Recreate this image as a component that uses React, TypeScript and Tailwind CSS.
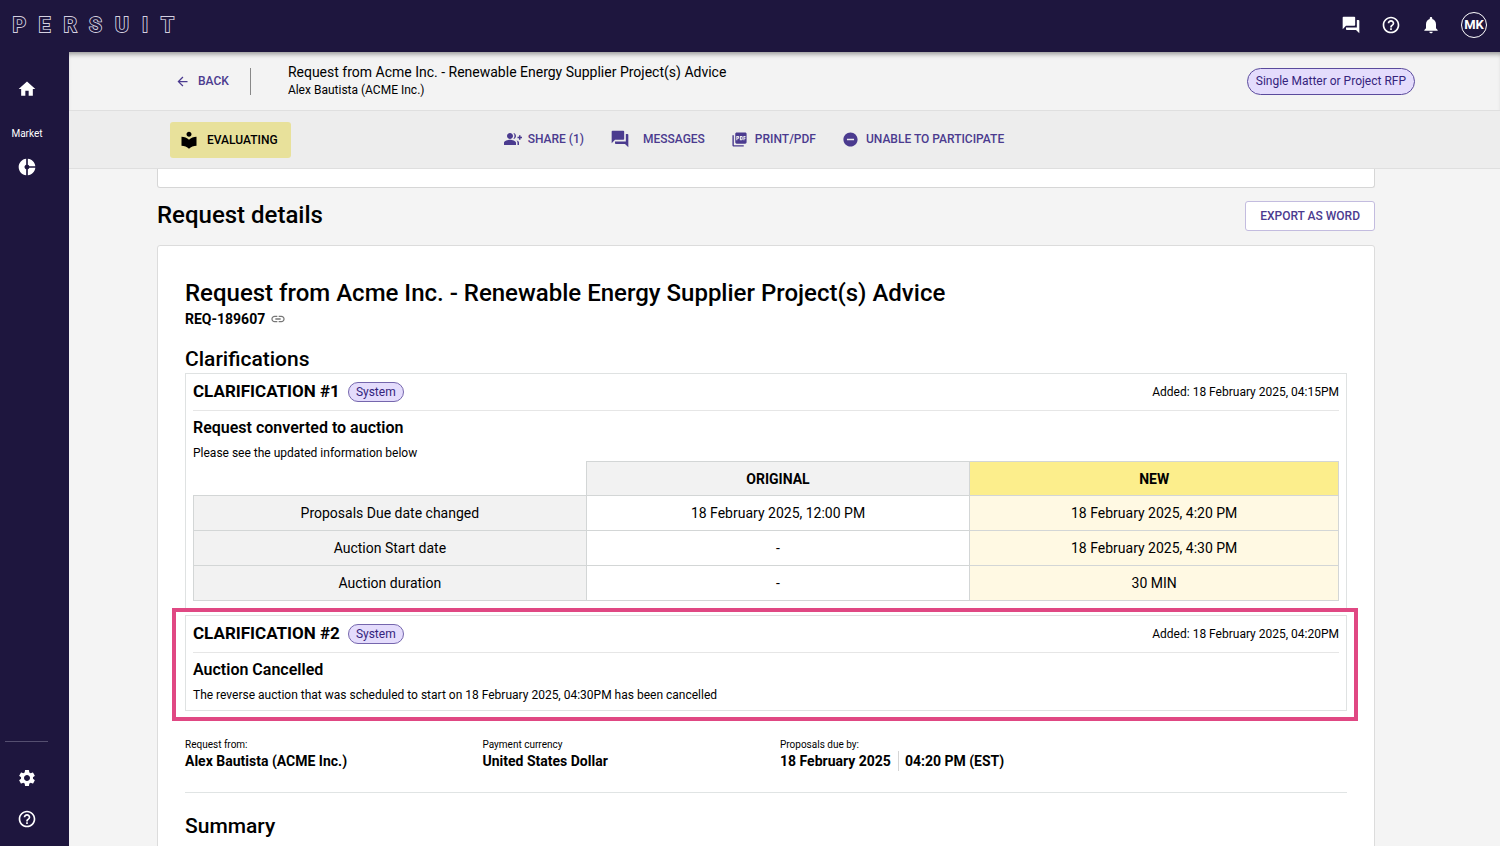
import type { ComponentType, ReactNode } from "react";
import {
  MdArrowBack,
  MdDonutSmall,
  MdForum,
  MdGroupAdd,
  MdHelpOutline,
  MdHome,
  MdLink,
  MdLocalLibrary,
  MdNotifications,
  MdPictureAsPdf,
  MdRemoveCircle,
  MdSettings,
} from "react-icons/md";

type Icon = ComponentType<{ className?: string }>;

function Logo() {
  return (
    <svg viewBox="0 0 180 32" className="h-8 w-[180px] opacity-95" role="img" aria-label="Persuit">
      <text
        x="4.5 30.5 55.5 81 107 134 153"
        y="23"
        fontFamily="Roboto, sans-serif"
        fontWeight="600"
        fontSize="21"
        fill="#1e163e"
        stroke="#dedbea"
        strokeWidth="1.8"
        paintOrder="stroke"
      >
        PERSUIT
      </text>
    </svg>
  );
}

function IconButton({ icon: I, label, size }: { icon: Icon; label: string; size: string }) {
  return (
    <button type="button" aria-label={label} className="flex items-center justify-center text-white">
      <I className={size} />
    </button>
  );
}

function TopBar() {
  return (
    <header className="relative z-10 flex h-[52px] shrink-0 items-center justify-between bg-[#1e163e] pr-[13px] pb-[2px] pl-2">
      <Logo />
      <div className="flex items-center gap-5">
        <IconButton icon={MdForum} label="Messages" size="size-5" />
        <IconButton icon={MdHelpOutline} label="Help" size="size-5" />
        <IconButton icon={MdNotifications} label="Notifications" size="size-5" />
        <button
          type="button"
          className="flex size-[26px] items-center justify-center rounded-full border border-white text-[13px] font-bold text-white"
        >
          MK
        </button>
      </div>
    </header>
  );
}

function SideBar() {
  return (
    <nav className="flex w-[69px] shrink-0 flex-col bg-[#1e163e] pr-[15px] text-white">
      <a href="#home" aria-label="Home" className="mt-[27px] flex justify-center">
        <MdHome className="size-5" />
      </a>
      <span className="mt-[26px] text-center text-[10px] leading-[18px]">Market</span>
      <a href="#market" aria-label="Market" className="mt-[14px] flex justify-center">
        <MdDonutSmall className="size-5" />
      </a>
      <div className="mt-auto mr-[6px] mb-[26px] ml-[5px] border-t border-[#554f70]" />
      <a href="#settings" aria-label="Settings" className="flex justify-center">
        <MdSettings className="size-5" />
      </a>
      <a href="#help" aria-label="Help" className="mt-[21px] mb-[17px] flex justify-center">
        <MdHelpOutline className="size-5" />
      </a>
    </nav>
  );
}

function TitleBar() {
  return (
    <div className="flex h-[59px] shrink-0 items-center border-b border-[#dfdfdf] bg-[#f3f3f3] pr-[85px] pl-[106px] shadow-[inset_0_5px_5px_-3px_rgba(0,0,0,0.4)]">
      <a href="#back" className="flex items-center gap-2 text-[12px] font-medium text-[#4b3b8f]">
        <MdArrowBack className="size-[15px]" />
        BACK
      </a>
      <div className="mr-[37px] ml-[21px] h-[27px] border-l border-[#888]" />
      <div>
        <p className="text-[14px] leading-[19px]">
          Request from Acme Inc. - Renewable Energy Supplier Project(s) Advice
        </p>
        <p className="text-[12px] leading-[17px]">Alex Bautista (ACME Inc.)</p>
      </div>
      <span className="ml-auto rounded-full border border-[#5a4a9c] bg-[#e4dcfc] px-2 text-[12px] leading-[25px] text-[#35247c]">
        Single Matter or Project RFP
      </span>
    </div>
  );
}

function Action({ icon: I, size, gap, children }: { icon: Icon; size: string; gap: string; children: ReactNode }) {
  return (
    <button type="button" className={`flex items-center text-[12px] font-medium text-[#4b3b8f] ${gap}`}>
      <I className={size} />
      {children}
    </button>
  );
}

function ActionBar() {
  return (
    <div className="flex h-[58px] shrink-0 items-center border-b border-[#dfdfdf] bg-[#ededed] pl-[101px]">
      <div className="flex h-9 items-center gap-2 rounded-[3px] bg-[#e8e19b] pr-[13px] pl-[9px] text-[12px] font-medium">
        <MdLocalLibrary className="size-5" />
        EVALUATING
      </div>
      <div className="ml-[213px] flex items-center gap-[26px] pb-px">
        <Action icon={MdGroupAdd} size="size-[18px]" gap="gap-[6px]">SHARE (1)</Action>
        <Action icon={MdForum} size="size-5" gap="gap-[13px]">MESSAGES</Action>
        <Action icon={MdPictureAsPdf} size="size-[17px]" gap="gap-[7px]">PRINT/PDF</Action>
        <Action icon={MdRemoveCircle} size="size-[17px]" gap="gap-[7px]">UNABLE TO PARTICIPATE</Action>
      </div>
    </div>
  );
}

function Clarification({
  number,
  added,
  title,
  text,
  children,
}: {
  number: number;
  added: string;
  title: string;
  text: string;
  children?: ReactNode;
}) {
  return (
    <section className="border border-[#dfe2e2] px-[7px] pb-[7px]">
      <div className="flex h-[37px] items-center gap-2 border-b border-[#e6e6e6]">
        <h4 className="text-[17px] font-bold">CLARIFICATION #{number}</h4>
        <span className="rounded-full border border-[#7566ad] bg-[#e4dcfc] px-[7px] text-[12px] leading-[18px] text-[#35247c]">
          System
        </span>
        <span className="ml-auto text-[12px]">Added: {added}</span>
      </div>
      <h5 className="text-[16px] leading-[34px] font-semibold">{title}</h5>
      <p className="text-[12px] leading-4">{text}</p>
      {children}
    </section>
  );
}

const changes = [
  ["Proposals Due date changed", "18 February 2025, 12:00 PM", "18 February 2025, 4:20 PM"],
  ["Auction Start date", "-", "18 February 2025, 4:30 PM"],
  ["Auction duration", "-", "30 MIN"],
];

function ChangesTable() {
  return (
    <table className="w-full table-fixed border-collapse text-center text-[14px] leading-5">
      <thead>
        <tr className="h-[34px]">
          <td className="w-[34.3%]" />
          <th scope="col" className="w-[33.5%] border border-[#d3d6d6] bg-[#f2f2f2] font-bold">
            ORIGINAL
          </th>
          <th scope="col" className="border border-[#d3d6d6] bg-[#fcee8c] font-bold">
            NEW
          </th>
        </tr>
      </thead>
      <tbody>
        {changes.map(([label, before, after]) => (
          <tr key={label} className="h-[35px]">
            <th scope="row" className="border border-[#d3d6d6] bg-[#f2f2f2] font-normal">
              {label}
            </th>
            <td className="border border-[#d3d6d6]">{before}</td>
            <td className="border border-[#d3d6d6] bg-[#fff9e3]">{after}</td>
          </tr>
        ))}
      </tbody>
    </table>
  );
}

function Field({ label, children }: { label: string; children: ReactNode }) {
  return (
    <div>
      <dt className="text-[10px] leading-[13px]">{label}</dt>
      <dd className="flex text-[14px] leading-5 font-bold whitespace-nowrap">{children}</dd>
    </div>
  );
}

function RequestCard() {
  return (
    <article className="rounded-[3px] border border-[#dcdcdc] bg-white px-[27px] pt-[30px] pb-10">
      <h2 className="text-[24px] leading-[34px] font-medium">
        Request from Acme Inc. - Renewable Energy Supplier Project(s) Advice
      </h2>
      <div className="flex items-center gap-[5px]">
        <span className="text-[14px] leading-[18px] font-bold">REQ-189607</span>
        <button type="button" aria-label="Copy link">
          <MdLink className="size-4 text-[#777]" />
        </button>
      </div>
      <h3 className="mt-[17px] text-[21px] leading-7 font-medium">Clarifications</h3>
      <Clarification
        number={1}
        added="18 February 2025, 04:15PM"
        title="Request converted to auction"
        text="Please see the updated information below"
      >
        <ChangesTable />
      </Clarification>
      <div className="relative mt-[6px]">
        <Clarification
          number={2}
          added="18 February 2025, 04:20PM"
          title="Auction Cancelled"
          text="The reverse auction that was scheduled to start on 18 February 2025, 04:30PM has been cancelled"
        />
        <div className="pointer-events-none absolute -top-[7px] -right-[11px] -bottom-[10px] -left-[13px] border-4 border-[#e04883]" />
      </div>
      <dl className="mt-[27px] grid grid-cols-4 gap-7">
        <Field label="Request from:">Alex Bautista (ACME Inc.)</Field>
        <Field label="Payment currency">United States Dollar</Field>
        <Field label="Proposals due by:">
          <span className="border-r border-[#d5d5d5] pr-[7px]">18 February 2025</span>
          <span className="pl-[6px]">04:20 PM (EST)</span>
        </Field>
      </dl>
      <hr className="mt-[21px] border-[#e0e4e4]" />
      <h3 className="mt-[19px] text-[21px] leading-7 font-medium">Summary</h3>
    </article>
  );
}

export default function App() {
  return (
    <div className="flex h-screen flex-col bg-[#f4f4f4] font-['Roboto',sans-serif] text-black">
      <TopBar />
      <div className="flex min-h-0 flex-1">
        <SideBar />
        <div className="flex min-w-0 flex-1 flex-col">
          <TitleBar />
          <ActionBar />
          <main className="min-h-0 flex-1 overflow-y-auto pr-[125px] pl-[88px] [scrollbar-width:none]">
            <div className="h-[19px] rounded-b-[3px] border border-t-0 border-[#d6d6d6] bg-white" />
            <div className="mt-[13px] mb-[14px] flex items-start justify-between">
              <h1 className="text-[24px] leading-7 font-medium">Request details</h1>
              <button
                type="button"
                className="h-[30px] rounded-[3px] border border-[#c3bcdf] bg-white px-[14px] text-[12px] font-medium text-[#4b3b8f]"
              >
                EXPORT AS WORD
              </button>
            </div>
            <RequestCard />
          </main>
        </div>
      </div>
    </div>
  );
}
